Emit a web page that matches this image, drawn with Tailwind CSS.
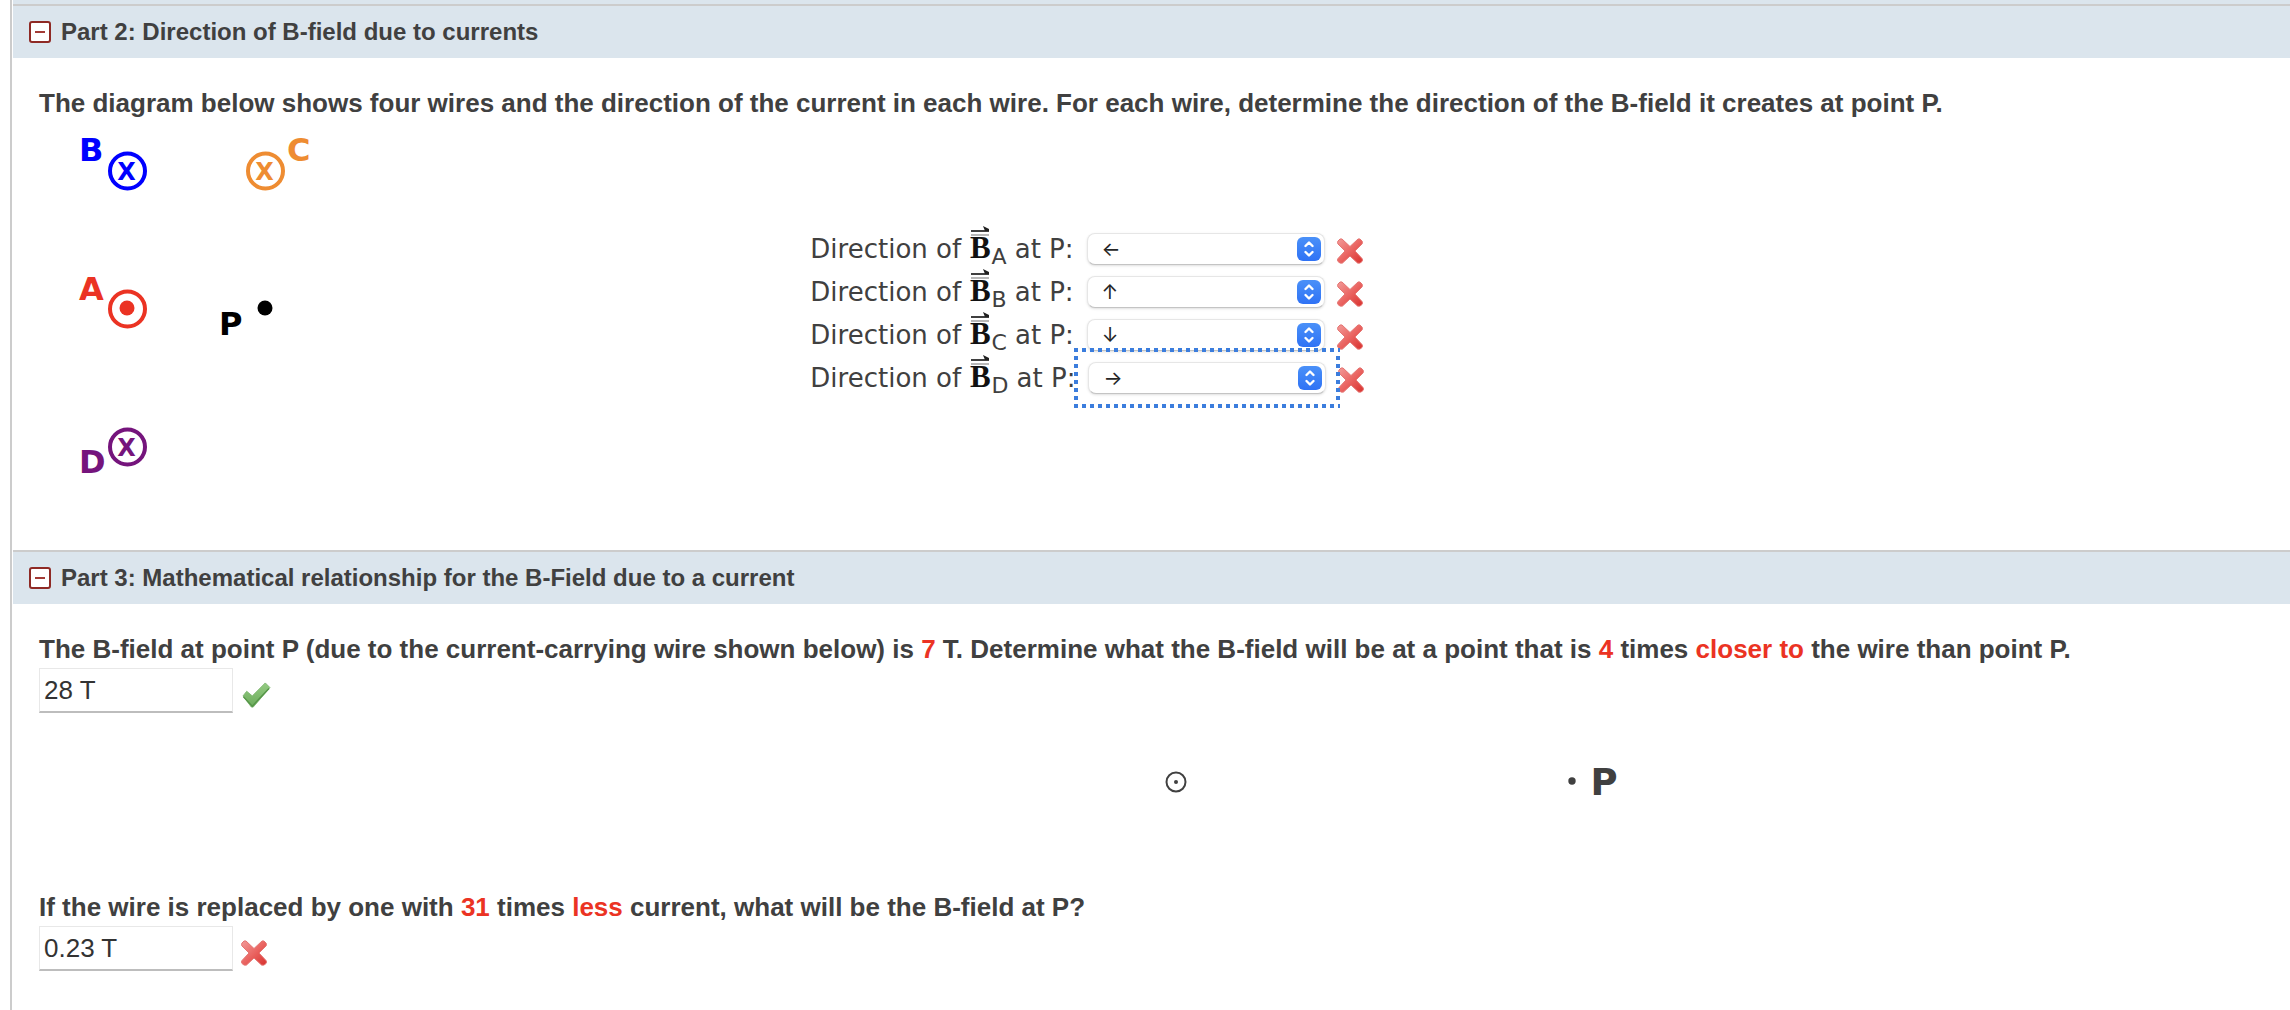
<!DOCTYPE html>
<html lang="en">
<head>
  <meta charset="UTF-8" />
  <meta name="viewport" content="width=device-width, initial-scale=1.0" />
  <title>B-field due to currents</title>
  <script src="https://cdn.jsdelivr.net/npm/@tailwindcss/browser@4"></script>
</head>
<body class="bg-white text-[#404040] font-['Liberation_Sans',Arial,sans-serif]">
  <!-- shared icons -->
  <svg class="absolute size-0">
    <defs>
      <linearGradient id="red" x1="0" y1="0" x2="1" y2="1">
        <stop offset="0" stop-color="#f29a98" />
        <stop offset="0.5" stop-color="#ea6562" />
        <stop offset="1" stop-color="#d8302d" />
      </linearGradient>
      <linearGradient id="green" x1="0" y1="0" x2="0" y2="1">
        <stop offset="0" stop-color="#94cb82" />
        <stop offset="1" stop-color="#6bab5b" />
      </linearGradient>
    </defs>
    <symbol id="wrong" viewBox="0 0 26 26">
      <path d="M5 1L13 8.500L21 1Q23 0 25 3Q26 4.500 25 6L18 13L25 20.500Q26 22 25 23.500Q23 26 20.500 25L13 18L5.500 25Q3 26 1 23.500Q0 22 1 20.500L8 13L1 6Q0 4.500 1 3Q3 0 5 1Z" fill="url(#red)" stroke="#e57572" stroke-width="1" />
    </symbol>
    <symbol id="vec" viewBox="0 0 18 34">
      <path d="M0 7H18" stroke="#404040" stroke-width="2" fill="none" />
      <path d="M0 11H18" stroke="#a0a0a0" stroke-width="1.500" fill="none" />
      <path d="M12 2L18 5V7H14Z" fill="#202020" />
    </symbol>
    <symbol id="updown" viewBox="0 0 24 24">
      <path d="M8.500 9L12 5.500L15.500 9M8.500 15L12 18.500L15.500 15" fill="none" stroke="#fff" stroke-width="2.400" stroke-linecap="round" stroke-linejoin="round" />
    </symbol>
  </svg>

  <main class="ml-[10px] min-h-screen border-l-2 border-[#cccccc] pl-px">
    <div class="h-1 bg-[#dbe5ed]"></div>

    <section>
      <header class="flex h-[54px] items-center gap-[10px] border-t-2 border-[#cccccc] bg-[#dbe5ed] pl-4">
        <button type="button" aria-label="Collapse part 2" class="flex size-[22px] items-center justify-center rounded-[3px] border-2 border-[#8f2a25] bg-white">
          <span class="h-[2px] w-[10px] bg-[#a23a36]"></span>
        </button>
        <h2 class="text-[24px] leading-[30px] font-bold">Part 2: Direction of B-field due to currents</h2>
      </header>
      <div class="pt-[30px] pb-[42px] pl-[26px]">
        <p class="text-[26px] leading-[30px] font-bold">The diagram below shows four wires and the direction of the current in each wire. For each wire, determine the direction of the B-field it creates at point P.</p>
        <div class="flex items-center gap-[21px]">
          <div class="w-1/3">
            <svg class="h-[390px] w-[300px]" viewBox="39 118 300 390" font-family="DejaVu Sans, Verdana, sans-serif" font-weight="bold" font-size="32">
              <g fill="#0000ff">
                <text x="79" y="161">B</text>
                <circle cx="127.500" cy="171" r="17.500" fill="none" stroke="#0000ff" stroke-width="4" />
                <text x="126.500" y="180" font-size="24" text-anchor="middle">X</text>
              </g>
              <g fill="#ee8c32">
                <text x="287" y="161">C</text>
                <circle cx="265.500" cy="171" r="17.500" fill="none" stroke="#ee8c32" stroke-width="4" />
                <text x="264.500" y="180" font-size="24" text-anchor="middle">X</text>
              </g>
              <g fill="#eb3323">
                <text x="79" y="300">A</text>
                <circle cx="127.500" cy="309" r="17.500" fill="none" stroke="#eb3323" stroke-width="4" />
                <circle cx="127" cy="308" r="7.500" />
              </g>
              <g fill="#000">
                <text x="219" y="335">P</text>
                <circle cx="265" cy="308" r="7.500" />
              </g>
              <g fill="#75147c">
                <text x="79" y="473">D</text>
                <circle cx="127.500" cy="447" r="17.500" fill="none" stroke="#75147c" stroke-width="4" />
                <text x="126.500" y="456" font-size="24" text-anchor="middle">X</text>
              </g>
            </svg>
          </div>

          <div class="text-[26px] leading-[43px] font-['DejaVu_Sans',Verdana,sans-serif]">
            <div class="flex h-[43px] items-center">
              <label for="dir-a" class="mr-[13px] pb-[2px] whitespace-nowrap">Direction of <svg class="mx-[2px] inline h-[34px] w-[18px] overflow-visible align-baseline" font-family="Liberation Serif, serif" font-weight="bold" font-size="31" fill="#111"><use href="#vec" /><text x="-1" y="34">B</text></svg><sub class="static align-sub text-[22px]">A</sub> at P:</label>
              <div class="relative mr-3">
                <select id="dir-a" class="block h-8 w-[238px] appearance-none rounded-lg border border-[#e6e6e6] border-b-[#c4c4c4] bg-white pl-[14px] text-[20px] leading-[28px] text-[#262626] shadow-sm font-['Inter',sans-serif]">
                  <option>←</option>
                </select>
                <svg class="pointer-events-none absolute top-1 right-1 size-6 rounded-md bg-linear-to-b from-[#4a90f8] to-[#2f72f5]"><use href="#updown" /></svg>
              </div>
              <svg class="mt-1 size-[26px]"><use href="#wrong" /></svg>
            </div>
            <div class="flex h-[43px] items-center">
              <label for="dir-b" class="mr-[13px] pb-[2px] whitespace-nowrap">Direction of <svg class="mx-[2px] inline h-[34px] w-[18px] overflow-visible align-baseline" font-family="Liberation Serif, serif" font-weight="bold" font-size="31" fill="#111"><use href="#vec" /><text x="-1" y="34">B</text></svg><sub class="static align-sub text-[22px]">B</sub> at P:</label>
              <div class="relative mr-3">
                <select id="dir-b" class="block h-8 w-[238px] appearance-none rounded-lg border border-[#e6e6e6] border-b-[#c4c4c4] bg-white pl-[14px] text-[20px] leading-[28px] text-[#262626] shadow-sm font-['Inter',sans-serif]">
                  <option>↑</option>
                </select>
                <svg class="pointer-events-none absolute top-1 right-1 size-6 rounded-md bg-linear-to-b from-[#4a90f8] to-[#2f72f5]"><use href="#updown" /></svg>
              </div>
              <svg class="mt-1 size-[26px]"><use href="#wrong" /></svg>
            </div>
            <div class="flex h-[43px] items-center">
              <label for="dir-c" class="mr-[13px] pb-[2px] whitespace-nowrap">Direction of <svg class="mx-[2px] inline h-[34px] w-[18px] overflow-visible align-baseline" font-family="Liberation Serif, serif" font-weight="bold" font-size="31" fill="#111"><use href="#vec" /><text x="-1" y="34">B</text></svg><sub class="static align-sub text-[22px]">C</sub> at P:</label>
              <div class="relative mr-3">
                <select id="dir-c" class="block h-8 w-[238px] appearance-none rounded-lg border border-[#e6e6e6] border-b-[#c4c4c4] bg-white pl-[14px] text-[20px] leading-[28px] text-[#262626] shadow-sm font-['Inter',sans-serif]">
                  <option>↓</option>
                </select>
                <svg class="pointer-events-none absolute top-1 right-1 size-6 rounded-md bg-linear-to-b from-[#4a90f8] to-[#2f72f5]"><use href="#updown" /></svg>
              </div>
              <svg class="mt-1 size-[26px]"><use href="#wrong" /></svg>
            </div>
            <div class="flex h-[43px] items-center">
              <label for="dir-d" class="mr-[13px] pb-[2px] whitespace-nowrap">Direction of <svg class="mx-[2px] inline h-[34px] w-[18px] overflow-visible align-baseline" font-family="Liberation Serif, serif" font-weight="bold" font-size="31" fill="#111"><use href="#vec" /><text x="-1" y="34">B</text></svg><sub class="static align-sub text-[22px]">D</sub> at P:</label>
              <div class="relative mr-3">
                <select id="dir-d" class="block h-8 w-[238px] appearance-none rounded-lg border border-[#e6e6e6] border-b-[#c4c4c4] bg-white pl-[14px] text-[20px] leading-[28px] text-[#262626] shadow-sm font-['Inter',sans-serif]">
                  <option>→</option>
                </select>
                <svg class="pointer-events-none absolute top-1 right-1 size-6 rounded-md bg-linear-to-b from-[#4a90f8] to-[#2f72f5]"><use href="#updown" /></svg>
                <!-- focus ring -->
                <svg class="pointer-events-none absolute -top-[14px] -left-[14px] h-[60px] w-[266px]" viewBox="0 0 266 60" fill="none" stroke="#3b7ddd" stroke-width="4" stroke-dasharray="4 4">
                  <path d="M0 2H266M0 58H266M2 8V56M264 8V56" />
                </svg>
              </div>
              <svg class="mt-1 size-[26px]"><use href="#wrong" /></svg>
            </div>
          </div>
        </div>
      </div>
    </section>

    <section>
      <header class="flex h-[54px] items-center gap-[10px] border-t-2 border-[#cccccc] bg-[#dbe5ed] pl-4">
        <button type="button" aria-label="Collapse part 3" class="flex size-[22px] items-center justify-center rounded-[3px] border-2 border-[#8f2a25] bg-white">
          <span class="h-[2px] w-[10px] bg-[#a23a36]"></span>
        </button>
        <h2 class="text-[24px] leading-[30px] font-bold">Part 3: Mathematical relationship for the B-Field due to a current</h2>
      </header>
      <div class="pt-[30px] pl-[26px]">
        <label for="closer" class="block text-[26px] leading-[30px] font-bold">The B-field at point P (due to the current-carrying wire shown below) is <span class="text-[#eb3323]">7</span> T. Determine what the B-field will be at a point that is <span class="text-[#eb3323]">4</span> times <span class="text-[#eb3323]">closer to</span> the wire than point P.</label>
        <div class="mt-1 flex items-center gap-2">
          <input id="closer" type="text" value="28 T" class="h-[45px] w-[194px] border border-b-2 border-[#e8e8e8] border-b-[#bdbdbd] px-1 text-[26px] text-[#333333]" />
          <svg class="mt-2 h-[26px] w-[30px]" viewBox="0 0 30 28">
            <path d="M1 15L5 10L11 15L25 1L30 6L12 27H10Z" fill="url(#green)" stroke="#7fb873" stroke-width="1" stroke-linejoin="round" />
            <path d="M1.500 16L11 26L29 7" fill="none" stroke="#559548" stroke-width="1.500" />
          </svg>
        </div>

        <div class="mt-10 mb-[81px] ml-[50%] flex h-[58px] items-center">
          <svg class="h-6 w-[411px]" viewBox="0 0 411 24" fill="#404040">
            <circle cx="11" cy="12" r="9.500" fill="none" stroke="#404040" stroke-width="2" />
            <circle cx="11" cy="12" r="2" />
            <circle cx="407" cy="11" r="3.700" />
          </svg>
          <span class="ml-[15px] text-[37px] leading-none font-bold font-['DejaVu_Sans',Verdana,sans-serif]">P</span>
        </div>

        <label for="less" class="block text-[26px] leading-[30px] font-bold">If the wire is replaced by one with <span class="text-[#eb3323]">31</span> times <span class="text-[#eb3323]">less</span> current, what will be the B-field at P?</label>
        <div class="mt-1 flex items-center gap-2">
          <input id="less" type="text" value="0.23 T" class="h-[45px] w-[194px] border border-b-2 border-[#e8e8e8] border-b-[#bdbdbd] px-1 text-[26px] text-[#333333]" />
          <svg class="mt-2 size-[26px]"><use href="#wrong" /></svg>
        </div>
      </div>
    </section>
  </main>
</body>
</html>
